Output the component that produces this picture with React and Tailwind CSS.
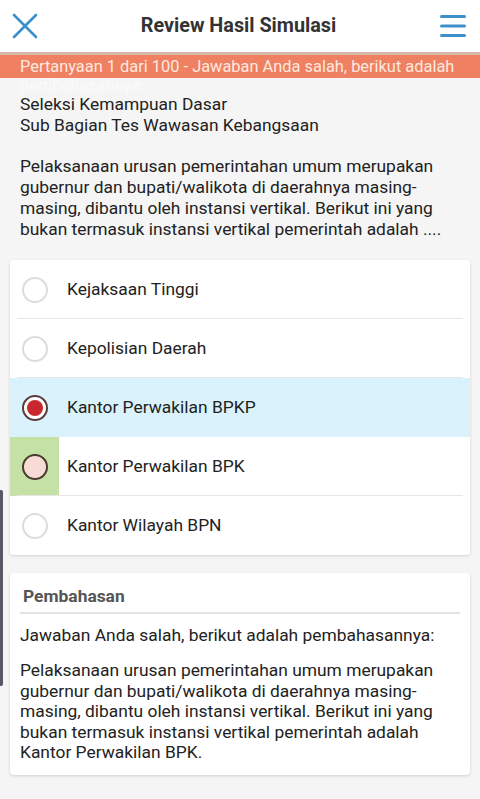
import React from 'react';

const options = [
  { label: 'Kejaksaan Tinggi', state: 'none' },
  { label: 'Kepolisian Daerah', state: 'none' },
  { label: 'Kantor Perwakilan BPKP', state: 'chosen' },
  { label: 'Kantor Perwakilan BPK', state: 'answer' },
  { label: 'Kantor Wilayah BPN', state: 'none' },
];

const question =
  'Pelaksanaan urusan pemerintahan umum merupakan gubernur dan bupati/walikota di daerahnya masing-masing, dibantu oleh instansi vertikal. Berikut ini yang bukan termasuk instansi vertikal pemerintah adalah ....';

function Radio({ state }) {
  if (state === 'chosen') {
    return (
      <span className="flex h-[26px] w-[26px] items-center justify-center rounded-full border-2 border-[#5a3b3b] bg-white">
        <span className="h-[16px] w-[16px] rounded-full bg-[#c8272d]" />
      </span>
    );
  }
  if (state === 'answer') {
    return <span className="h-[26px] w-[26px] rounded-full border-2 border-[#4a3a30] bg-[#f7dcd6]" />;
  }
  return <span className="h-[26px] w-[26px] rounded-full border-2 border-[#dcdcdc] bg-white" />;
}

function OptionRow({ label, state, last }) {
  const bg = state === 'chosen' ? 'bg-[#d9f2fb]' : 'bg-white';
  return (
    <div className={`relative flex h-[59px] items-center ${bg}`}>
      <div
        className={`flex h-full w-[49px] items-center justify-center ${
          state === 'answer' ? 'bg-[#c6e1a6]' : ''
        }`}
      >
        <Radio state={state} />
      </div>
      <span className="pl-[8px] text-[17.4px] text-[#222]">{label}</span>
      {!last && state !== 'chosen' && (
        <span className="absolute bottom-0 left-[7px] right-[7px] h-px bg-[#e6e6e6]" />
      )}
    </div>
  );
}

export default function App() {
  return (
    <div className="relative min-h-[799px] w-[480px] overflow-hidden bg-[#f5f5f5] font-['Roboto',sans-serif] text-[#222]">
      {/* Header */}
      <header className="flex h-[52px] items-center justify-between bg-white px-[12px]">
        <svg width="26" height="26" viewBox="0 0 26 26" fill="none" stroke="#3d8fcc" strokeWidth="2.6" strokeLinecap="round">
          <path d="M2 2 L24 24 M24 2 L2 24" />
        </svg>
        <h1 className="text-[19.8px] font-bold text-[#333]">Review Hasil Simulasi</h1>
        <svg width="28" height="26" viewBox="0 0 28 26" className="mr-[1px]">
          <rect x="1" y="2" width="26" height="3" rx="1.5" fill="#3d8fcc" />
          <rect x="1" y="11.5" width="26" height="3" rx="1.5" fill="#3d8fcc" />
          <rect x="1" y="21" width="26" height="3" rx="1.5" fill="#3d8fcc" />
        </svg>
      </header>
      <div className="h-[3px] bg-[#d7b9a8]" />

      {/* Status banner; second line is clipped behind the content */}
      <div className="relative h-[23px]">
        <div className="bg-[#ef8062] px-[20px] text-[16.4px] leading-[23px] text-[#fde9df]">
          Pertanyaan 1 dari 100 - Jawaban Anda salah, berikut adalah
        </div>
        <div className="absolute left-[20px] top-[25px] text-[16.4px] leading-[11px] text-white/60">pembahasannya:</div>
      </div>

      {/* Question */}
      <section className="px-[20px] pt-[16px] text-[17.4px] leading-[21px]">
        <p>Seleksi Kemampuan Dasar</p>
        <p>Sub Bagian Tes Wawasan Kebangsaan</p>
        <p className="mt-[20px]">{question}</p>
      </section>

      {/* Options */}
      <div className="mx-[10px] mt-[20px] overflow-hidden rounded-[4px] bg-white shadow-[0_1px_3px_rgba(0,0,0,0.15)]">
        {options.map((o, i) => (
          <OptionRow key={o.label} label={o.label} state={o.state} last={i === options.length - 1} />
        ))}
      </div>

      {/* Explanation */}
      <div className="mx-[10px] mt-[18px] rounded-[4px] bg-white px-[10px] pb-[12px] pt-[13px] shadow-[0_1px_3px_rgba(0,0,0,0.15)]">
        <h2 className="px-[3px] text-[17.4px] font-bold leading-[21px] text-[#555]">Pembahasan</h2>
        <div className="mt-[5px] h-[2px] bg-[#e3e3e3]" />
        <p className="mt-[11px] text-[17.4px] leading-[21px]">Jawaban Anda salah, berikut adalah pembahasannya:</p>
        <p className="mt-[14px] text-[17.4px] leading-[20.5px]">
          Pelaksanaan urusan pemerintahan umum merupakan gubernur dan bupati/walikota di daerahnya masing-masing,
          dibantu oleh instansi vertikal. Berikut ini yang bukan termasuk instansi vertikal pemerintah adalah Kantor
          Perwakilan BPK.
        </p>
      </div>

      {/* edge scroll handle overlay */}
      <span className="absolute left-0 top-[490px] h-[196px] w-[3px] rounded-r-[2px] bg-[#5a5766]" />
    </div>
  );
}
